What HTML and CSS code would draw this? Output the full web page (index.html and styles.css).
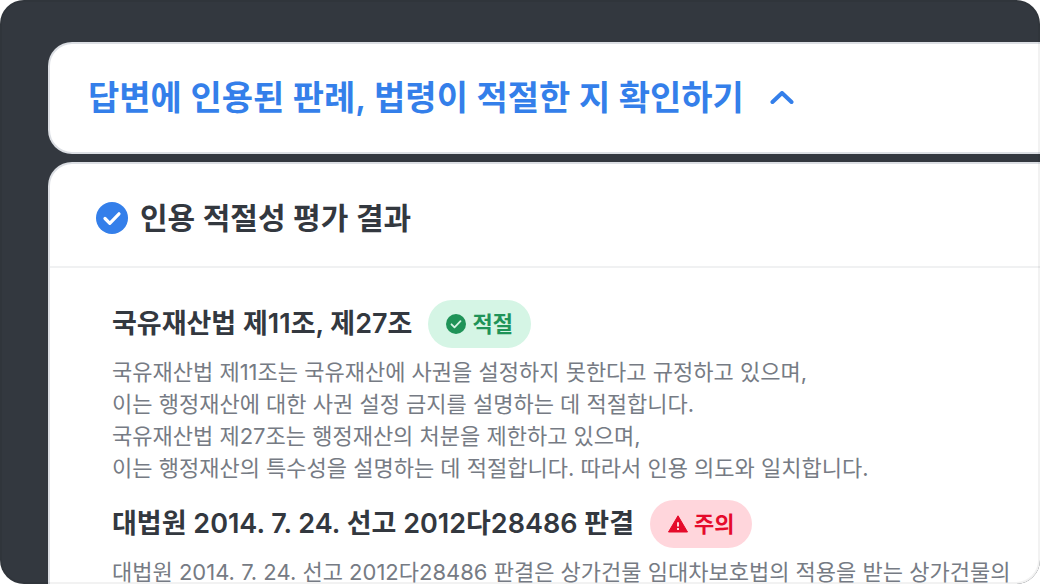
FILE: index.html
```html
<!DOCTYPE html>
<html lang="ko">
<head>
<meta charset="utf-8">
<meta name="viewport" content="width=device-width, initial-scale=1">
<title>인용 적절성 평가 결과</title>
<link rel="stylesheet" href="styles.css">
</head>
<body>
<main class="frame">
  <button class="toggle" type="button" aria-expanded="true" aria-controls="result">
    <span>답변에 인용된 판례, 법령이 적절한 지 확인하기</span>
    <svg class="chevron" viewBox="0 0 24 14" fill="none" stroke="currentColor" stroke-width="4" stroke-linecap="round" stroke-linejoin="round" aria-hidden="true"><path d="M2.500 11 12 2l9.500 9"/></svg>
  </button>
  <section class="panel" id="result">
    <header class="panel-header">
      <svg class="panel-icon" viewBox="0 0 32 32" aria-hidden="true"><circle cx="16" cy="16" r="16" fill="#347fea"/><path d="m9 16.500 4.800 4.800 9.200-9.500" fill="none" stroke="#fff" stroke-width="3.200" stroke-linecap="round" stroke-linejoin="round"/></svg>
      <h1 class="panel-title">인용 적절성 평가 결과</h1>
    </header>
    <div class="items">
      <article class="item">
        <div class="item-head">
          <h2 class="item-title">국유재산법 제11조, 제27조</h2>
          <span class="badge badge-ok"><svg class="badge-icon" viewBox="0 0 20 20" aria-hidden="true"><circle cx="10" cy="10" r="10" fill="currentColor"/><path d="m5.500 10.300 3 3 6-6.100" fill="none" stroke="#d5f5e5" stroke-width="1.800" stroke-linecap="round" stroke-linejoin="round"/></svg>적절</span>
        </div>
        <p class="item-text">국유재산법 제11조는 국유재산에 사권을 설정하지 못한다고 규정하고 있으며,<br>이는 행정재산에 대한 사권 설정 금지를 설명하는 데 적절합니다.<br>국유재산법 제27조는 행정재산의 처분을 제한하고 있으며,<br>이는 행정재산의 특수성을 설명하는 데 적절합니다. 따라서 인용 의도와 일치합니다.</p>
      </article>
      <article class="item">
        <div class="item-head">
          <h2 class="item-title">대법원 2014. 7. 24. 선고 2012다28486 판결</h2>
          <span class="badge badge-warn"><svg class="badge-icon" viewBox="0 0 20 20" aria-hidden="true"><path d="M10 1.800 19.500 18H.500Z" fill="currentColor" stroke="currentColor" stroke-width="1" stroke-linejoin="round"/><path d="M10 8.200v4.300M10 14v2" fill="none" stroke="#ffd6dc" stroke-width="2"/></svg>주의</span>
        </div>
        <p class="item-text">대법원 2014. 7. 24. 선고 2012다28486 판결은 상가건물 임대차보호법의 적용을 받는 상가건물의</p>
      </article>
    </div>
  </section>
</main>
</body>
</html>
```

FILE: styles.css
```css
* { box-sizing: border-box; }

body {
  margin: 0;
  background: #fff;
  color: #33383f;
  font-family: Inter, "Noto Sans CJK KR", sans-serif;
}

.frame {
  position: relative;
  display: flex;
  flex-direction: column;
  gap: 8px;
  height: 100vh;
  padding: 42px 0 0 48px;
  overflow: hidden;
  clip-path: inset(0 round 24px);
  background: #33383f;
}

/* Hairline drawn over the frame edge */
.frame::after {
  content: "";
  position: absolute;
  inset: 0;
  border: 2px solid rgba(0, 0, 0, 0.05);
  border-radius: 24px;
  pointer-events: none;
}

.toggle {
  display: flex;
  flex: none;
  align-items: center;
  gap: 26px;
  padding: 30px 38px;
  border: 2px solid #dcdfe4;
  border-right: 0;
  border-radius: 24px 0 0 24px;
  background: #fff;
  color: #347fea;
  font: inherit;
  font-size: 34px;
  font-weight: 600;
  line-height: 48px;
  white-space: nowrap;
  cursor: pointer;
}

.chevron {
  width: 24px;
  height: 14px;
}

.panel {
  flex: none;
  border: 2px solid #dcdfe4;
  border-right: 0;
  border-radius: 24px 0 0 24px;
  background: #fff;
}

.panel-header {
  display: flex;
  align-items: center;
  gap: 12px;
  padding: 34px 46px 28px;
  border-bottom: 2px solid #f0f1f2;
}

.panel-icon {
  width: 32px;
  height: 32px;
}

.panel-title {
  margin: 0;
  font-size: 30px;
  font-weight: 600;
  line-height: 40px;
}

.items {
  display: grid;
  gap: 16px;
  padding: 32px 0 32px 62px;
}

.item {
  display: grid;
  gap: 8px;
  white-space: nowrap;
}

.item-head {
  display: flex;
  align-items: center;
  gap: 16px;
}

.item-title {
  margin: 0;
  font-size: 27px;
  font-weight: 600;
  line-height: 40px;
}

.badge {
  display: flex;
  align-items: center;
  gap: 6px;
  padding: 8px 18px;
  border-radius: 24px;
  font-size: 22px;
  font-weight: 700;
  line-height: 32px;
}

.badge-ok {
  background: #d5f5e5;
  color: #1f9358;
}

.badge-warn {
  background: #ffd6dc;
  color: #e50b2b;
}

.badge-icon {
  width: 20px;
  height: 20px;
}

.item-text {
  margin: 0;
  color: #767b84;
  font-size: 22px;
  line-height: 32px;
}
```
